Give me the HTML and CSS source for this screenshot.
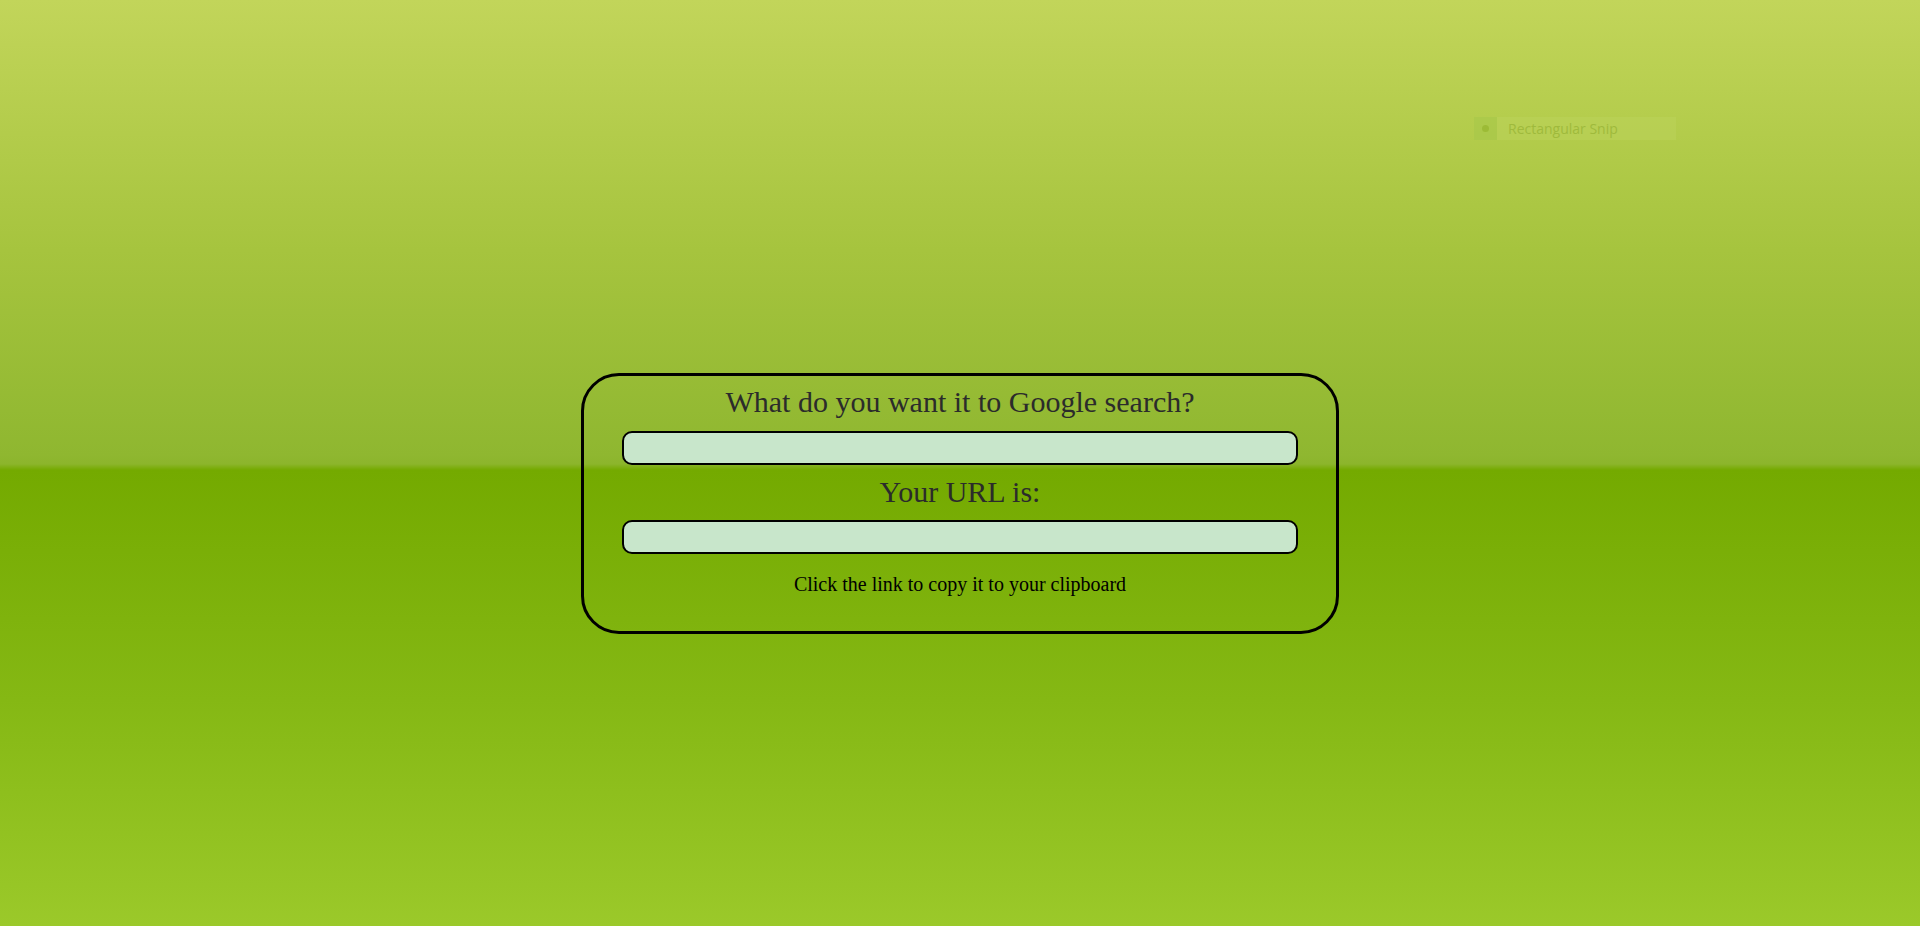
FILE: index.html
```html
<!DOCTYPE html>
<html>
<head>
<meta charset="utf-8">
<title>Google search link</title>
<link rel="stylesheet" href="styles.css">
</head>
<body>
<div class="snip-ghost"><span class="snip-icon"><span class="snip-dot"></span></span><span class="snip-label">Rectangular Snip</span></div>
<main class="page">
  <section class="card">
    <h2 class="title">What do you want it to Google search?</h2>
    <input class="field" type="text">
    <h2 class="title">Your URL is:</h2>
    <input class="field" type="text">
    <p class="hint">Click the link to copy it to your clipboard</p>
  </section>
</main>
</body>
</html>
```
FILE: styles.css
```css
html, body {
  margin: 0;
  padding: 0;
  height: 100%;
}
body {
  font-family: "Liberation Serif", "Times New Roman", serif;
  background: linear-gradient(to bottom,
    #c2d55a 0px,
    #a6c43e 250px,
    #8fb730 455px,
    #8cb52c 464px,
    #74aa00 470px,
    #85b814 700px,
    #9bc92a 926px);
  overflow: hidden;
}
.page {
  display: flex;
  justify-content: center;
  padding-top: 373px;
}
.card {
  box-sizing: border-box;
  width: 758px;
  height: 261px;
  border: 3px solid #000;
  border-radius: 38px;
  padding-top: 8px;
  display: flex;
  flex-direction: column;
  align-items: center;
}
.title {
  margin: 0;
  font-weight: normal;
  font-size: 30px;
  line-height: 36px;
  color: #2b2b2b;
}
.field {
  box-sizing: border-box;
  width: 90%;
  height: 34px;
  margin: 11px 0 9px;
  border: 2px solid #000;
  border-radius: 10px;
  background: #c8e6cb;
  outline: none;
}
.field + .title + .field {
  margin-top: 10px;
}
.hint {
  margin: 10px 0 0;
  font-size: 20px;
  line-height: 23px;
  color: #000;
}
.snip-ghost {
  position: absolute;
  left: 1474px;
  top: 117px;
  width: 202px;
  height: 23px;
  display: flex;
  align-items: center;
  background: rgba(190, 212, 95, 0.4);
  font-family: "Open Sans", "DejaVu Sans", sans-serif;
  font-size: 14px;
  color: #9fba3c;
}
.snip-icon {
  width: 23px;
  height: 23px;
  display: flex;
  align-items: center;
  justify-content: center;
  background: rgba(160, 195, 65, 0.5);
}
.snip-dot {
  width: 7px;
  height: 7px;
  border-radius: 50%;
  background: #9cbb36;
}
.snip-label {
  margin-left: 11px;
}
```
